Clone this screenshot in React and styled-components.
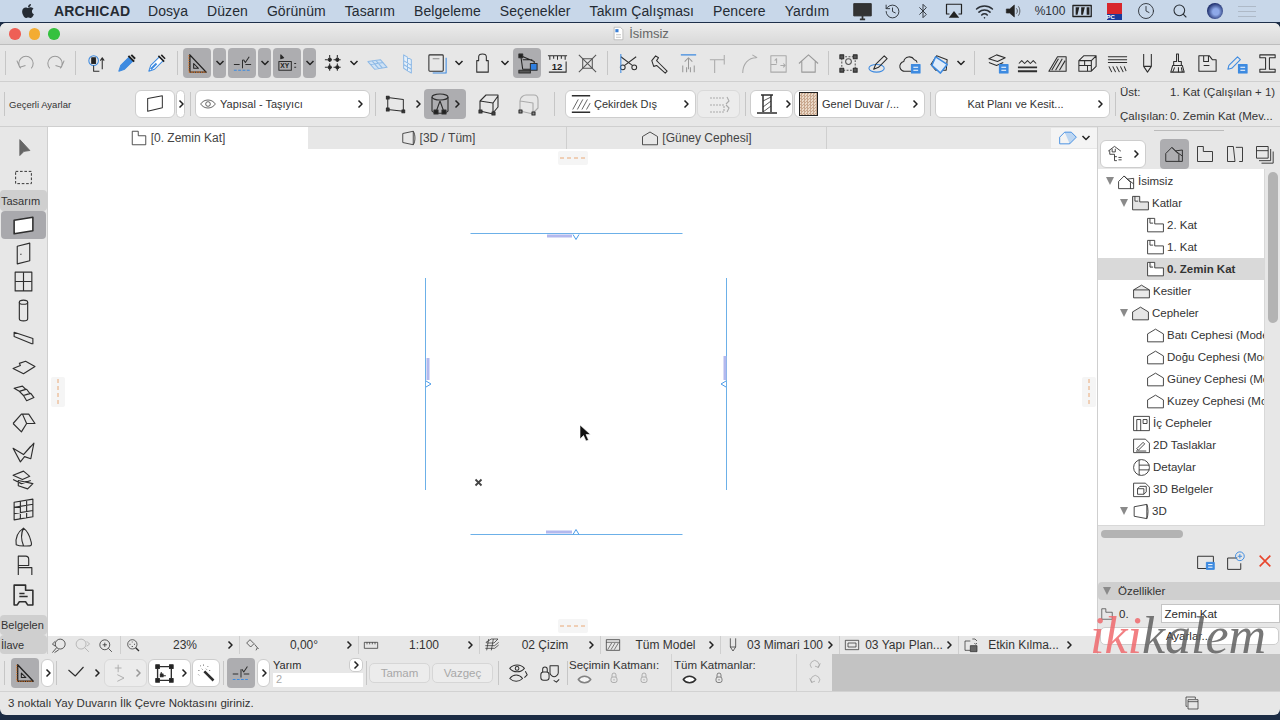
import React from "react";
import styled, { createGlobalStyle } from "styled-components";
import { FaApple } from "react-icons/fa";
import { History, Bluetooth, Wifi, Search, Clock } from "lucide-react";

const GlobalStyle = createGlobalStyle`
  html, body { margin: 0; padding: 0; background: #1c2c44; }
  body { font-family: "Liberation Sans", Arial, sans-serif; color: #2b2b2b; overflow: hidden; }
  * { box-sizing: border-box; }
`;

const BLUE = "#3d8ae0";

// tool drawings, all on a 24x24 grid
const icons = {
  undo: <path d="M7 17A7.5 7.5 0 1 1 18 17M3 9l3 7 6-2" stroke="#9a9a9a" />,
  redo: <path d="M17 17A7.5 7.5 0 1 0 6 17M21 9l-3 7-6-2" stroke="#9a9a9a" />,
  pick: <><circle cx="9" cy="9" r="5" stroke={BLUE} /><rect x="7" y="6" width="4" height="6" fill="#222" /><path d="M9 14v6h6M18 18V6l-2 3M18 6l2 3" /></>,
  dropper: <><path d="M4 20l2-6 9-9 4 4-9 9z" fill={BLUE} stroke={BLUE} /><path d="M14 4l6 6M17 3l4 4" stroke="#222" strokeWidth="2" /></>,
  dropper2: <><path d="M4 20l2-6 9-9 4 4-9 9z" fill="#fff" stroke={BLUE} /><path d="M6 18l6-6" stroke={BLUE} strokeWidth="2" /><path d="M14 4l6 6M17 3l4 4" stroke="#222" strokeWidth="1.6" /></>,
  triangle: <><path d="M4 3v18h17z" stroke="#222" strokeWidth="1.5" /><path d="M8 12v5h5z" stroke="#222" /><path d="M3 21h18M3 3v18" stroke="#e07a2a" strokeDasharray="1.5 1" /></>,
  snap: <><path d="M3 13h6M15 13h6M12 8v9" /><path d="M13 8l2 3 4-6" /><path d="M3 19h18" stroke={BLUE} strokeDasharray="3 1.5" /></>,
  xy: <><path d="M5 3l3 3-3 1z" fill="#222" /><rect x="3" y="10" width="13" height="9" /><text x="4.5" y="17" fontSize="7" fontFamily="Liberation Sans" fontWeight="700" fill="#222" stroke="none">XY</text><path d="M19 12h2M19 16h2" /></>,
  grid: <><path d="M8 3v18M16 3v18M3 8h18M3 16h18" strokeDasharray="3 1.5" /><g fill="#222"><circle cx="8" cy="8" r="1.6" /><circle cx="16" cy="8" r="1.6" /><circle cx="8" cy="16" r="1.6" /><circle cx="16" cy="16" r="1.6" /></g></>,
  plane: <path d="M2 10l13-2 7 8-13 2zM6 9l7 8M10 8.500l7 8M5 13l13-2" stroke="#8db9e6" fill="#cfe2f5" />,
  plane2: <path d="M8 3l8 5v14l-8-5zM8 9l8 5M8 13l8 5M12 5v15" stroke="#8db9e6" fill="#e6f0fa" />,
  sheet: <><rect x="3" y="3" width="15" height="17" rx="1" /><path d="M7 22h14V6" stroke={BLUE} /><path d="M7 7h7" stroke="#888" /></>,
  person: <path d="M8 9V5a4 3 0 0 1 8 0v4h2v12H6V9z" />,
  align: <><path d="M5 4l14 6v8H7zM7 8h10" stroke="#222" /><rect x="3" y="2" width="4" height="4" fill="#222" /><path d="M3 19h12v3H3z" fill="#555" /><rect x="15" y="12" width="7" height="7" fill="#2f7fe0" /></>,
  ruler: <><path d="M2 4h20M4 4v4M8 4v3M12 4v4M16 4v3M20 4v4M3 21h18V10" /><text x="6" y="19" fontSize="10" fontFamily="Liberation Sans" fontWeight="700" fill="#222" stroke="none">12</text></>,
  cross: <><rect x="7" y="7" width="10" height="10" stroke="#555" /><path d="M3 3l18 18M21 3L3 21" stroke="#555" /></>,
  scissors: <><circle cx="6" cy="16" r="2.500" /><circle cx="18" cy="16" r="2.500" /><path d="M8 14L20 5M16 14L4 5" /><path d="M4 2v20" stroke={BLUE} /></>,
  wrench: <path d="M5 9l4-5 3 2-2 3 3 3 8 8-2 2-9-8-3 1z" />,
  up: <><path d="M4 3h16" stroke={BLUE} /><path d="M12 6v12M8 10l4-4 4 4M6 14v7M10 16v5M14 16v5M18 14v7" stroke="#999" /></>,
  corner: <path d="M8 22V8h10M8 8H3M18 3v10" stroke="#aaa" />,
  curve: <path d="M6 22C6 12 12 6 20 6M16 3l5 3M3 12" stroke="#aaa" />,
  box: <><rect x="4" y="4" width="16" height="17" stroke="#aaa" /><path d="M10 12V7l-2 2M14 14h5M17 12l2 2-2 2M4 13h6" stroke="#aaa" /></>,
  home: <path d="M2 12L12 3l10 9M5 10v11h14V10" stroke="#999" />,
  frame: <><path d="M5 5h14v14H5z" strokeDasharray="2 1.5" stroke="#555" /><circle cx="12" cy="10" r="3" stroke="#555" /><g fill="#555"><rect x="3" y="3" width="4" height="4" /><rect x="17" y="3" width="4" height="4" /><rect x="3" y="17" width="4" height="4" /><rect x="17" y="17" width="4" height="4" /></g></>,
  penBlue: <><ellipse cx="10" cy="17" rx="8" ry="4" stroke={BLUE} /><path d="M7 18l2-5 9-9 3 3-9 9z" /></>,
  cloud: <><path d="M14 20H8a5 5 0 0 1-2-10 6 6 0 0 1 11-2 4 4 0 0 1 3 3" /><rect x="14" y="13" width="9" height="9" fill={BLUE} stroke={BLUE} /><path d="M16 16h5M16 19h5" stroke="#fff" /></>,
  gem: <><path d="M3 13l6-9 11 4-1 11H8z" /><path d="M8 5l12 8-7 9-9-8z" stroke={BLUE} strokeWidth="1.600" fill="#dfecfa" /></>,
  stack: <><path d="M3 7l8-4 9 3-8 4zM3 11l8 3 7-3M3 15" /><rect x="14" y="13" width="9" height="9" fill={BLUE} stroke={BLUE} /><path d="M16 16h5M16 19h5" stroke="#fff" /></>,
  waves: <><path d="M3 12l3-3 3 3 3-3 3 3 3-3 3 3" /><path d="M2 16h20M2 20h20" strokeWidth="2" /></>,
  hatchBox: <><path d="M3 20L12 5h9v15z" fill="#ddd" /><path d="M6 19l7-12M10 19l7-12M14 19l6-10" /></>,
  bricks: <><path d="M3 9l5-5h13v11l-5 5H3zM3 9h13v11M16 9l5-5M3 14h13M9 9v5M12 14v6" /></>,
  layersH: <path d="M2 5h20M2 8h20M2 11h20M3 15l3 6M7 15l3 6M11 15l3 6M15 15l3 6M19 15l2 5" strokeWidth="1.100" />,
  pen: <><path d="M8 2v13l4 6 4-6V2M8 15h8" /></>,
  brush: <><path d="M11 2h2v8h3v4H8v-4h3zM7 14h10l2 7H5z" /><path d="M9 16l-2 5M13 16v5M16 16l1 5" /></>,
  zoneCard: <><path d="M3 4h11l3 4h4v12H3zM8 4v6h5V4M8 14h6" /></>,
  penCard: <><path d="M3 14l9-9 3 3-9 9-4 1z" stroke={BLUE} /><rect x="13" y="13" width="9" height="9" fill={BLUE} stroke={BLUE} /><path d="M15 16h5M15 19h5" stroke="#fff" /></>,
  beam: <path d="M4 3h16v3h-6v12h6v3H4v-3h6V6H4z" />,
  wallFlat: <path d="M4 6l16-3v13L4 20z" />,
  wallFlatDots: <><path d="M3 5l17 2v13L3 18z" /><g fill="#333"><rect x="1.500" y="3.500" width="3" height="3" /><rect x="1.500" y="16.500" width="3" height="3" /><rect x="18.500" y="18.500" width="3" height="3" /></g></>,
  cylinder: <><ellipse cx="12" cy="5" rx="8" ry="3" /><path d="M4 5v14c2 3 14 3 16 0V5M12 9l-4 11M12 9l4 11" /><g fill="#222"><rect x="6" y="18" width="4" height="4" /><rect x="14" y="18" width="4" height="4" /></g></>,
  wallBox: <><path d="M3 9l13 2v11L3 19zM3 9l6-6h12v12l-5 6M16 11l5-7" /><g fill="#444"><rect x="15" y="20" width="3" height="3" /><rect x="2" y="18" width="3" height="3" /></g></>,
  wallBox2: <><path d="M3 9l13 2v11L3 19zM3 9c0-4 4-6 6-6h8c3 0 4 2 4 5v8l-5 5" stroke="#aaa" /><g fill="#888"><rect x="15" y="20" width="3" height="3" /><rect x="2" y="18" width="3" height="3" /></g></>,
  eye: <><path d="M1 12c5-8 17-8 22 0-5 8-17 8-22 0z" /><circle cx="12" cy="12" r="3.500" /></>,
  hatchBar: <><path d="M2 3h20M2 21h20" strokeWidth="1.800" /><path d="M3 18L9 7M8 18l6-11M13 18l6-11M18 18l4-7" strokeWidth=".8" /></>,
  swap: <><path d="M3 6h14M3 13h14v7H3" strokeDasharray="2 1" stroke="#aaa" /><path d="M20 5l2 4-3 3M20 20l2-4-3-3" stroke="#aaa" /></>,
  wallEnd: <><path d="M6 3h12M8 3v17M16 3v17M2 21h20" strokeWidth="1.500" /><path d="M8 9l8-4M8 15l8-6M8 20l8-6" strokeWidth=".8" /></>,
  arrow: <path d="M7 2v19l5-5 7-1z" fill="#666" stroke="#666" />,
  marquee: <rect x="3" y="5" width="18" height="14" strokeDasharray="3 2" />,
  wall: <path d="M3 7l18-3v13L3 20z" fill="#fff" strokeWidth="1.500" />,
  door: <><path d="M6 5l12-3v17l-12 3z" /><path d="M9 13l1-.5" /></>,
  window: <><rect x="4" y="3" width="16" height="18" /><path d="M12 3v18M4 12h16" /></>,
  column: <><ellipse cx="12" cy="4" rx="4" ry="2" /><path d="M8 4v16a4 2 0 0 0 8 0V4" /></>,
  beamSlope: <path d="M3 6l18 6v5l-1 0L3 10z" />,
  slab: <path d="M2 13l7-3-1-2 6-2 9 5-11 7z" />,
  stairs: <path d="M3 5l8-2 3 3-6 2zM8 8l7-2 3 4-6 2zM12 12l7-2 3 4-7 3z" />,
  roof: <path d="M2 12L10 3h7l6 9-8 0-4-9M2 12l8 8 5-8" />,
  shell: <path d="M2 8l10 6 10-11-3 15-6-2-4 5zM12 14l7-8" />,
  morph: <path d="M2 7l10-4 6 5-7 3zM2 11l8 4 9-3M7 12l14 3-5 5-9-3z" />,
  curtain: <><path d="M3 5l18-3v17L3 22zM3 10l18-3M3 16l18-3M9 4v17M15 3v17" /></>,
  organic: <><path d="M12 3C6 7 4 12 5 19c4 2 9 1 13 1 2 0 2-2 1-5-1-4-3-9-7-12zM12 3c-3 6-2 12 0 17" /></>,
  chair: <path d="M7 21V3h7a3 3 0 0 1 3 3v6H7M7 14h13v7M7 10" />,
  zone: <><path d="M3 3h11v5h7v14h-5l-2-3H8l-2 3H3zM8 14h8M8 11h5" strokeWidth="1.500" /></>,
  lock: <><rect x="6" y="10" width="12" height="11" rx="4" /><path d="M8 10V6a4 4 0 0 1 8 0v4M12 14v3" /></>,
  eyeSwap: <><path d="M3 7c4-5 12-5 16 0-4 5-12 5-16 0zM3 18c4-5 10-5 14 0-4 4-10 4-14 0z" /><circle cx="11" cy="7" r="2" /><path d="M20 10l2 4-3 3" /></>,
  lockSwap: <><rect x="2" y="11" width="9" height="9" rx="3" /><path d="M4 11V8a2.500 2.500 0 0 1 5 0v3M12 4h9v8c0 2-3 4-4.500 4S12 14 12 12z" /><path d="M16 20l3 2 3-3" /></>,
  magL: <><circle cx="11" cy="11" r="7" /><path d="M16 16l5 5M8 11h6M11 8v6" /></>,
  magA: <><circle cx="11" cy="11" r="7" /><path d="M16 16l5 5M11 7v1M11 14v1M7 11h1M14 11h1" strokeWidth="2" /></>,
  zoomPrev: <><circle cx="13" cy="10" r="7" /><path d="M2 10l4-4M2 10l4 3M8 15l-6 7M5 22l6-4" /></>,
  zoomNext: <><circle cx="10" cy="10" r="7" stroke="#aaa" /><path d="M22 10l-4-4M22 10l-4 3M15 15l6 6" stroke="#aaa" /></>,
  angle: <><path d="M4 9l5-5 6 6-5 5zM16 11l4 5M18 20l2-4 2 2" /></>,
  scale: <><rect x="2" y="8" width="20" height="9" /><path d="M6 8v3M10 8v3M14 8v3M18 8v3" /></>,
  layers: <path d="M3 8l8-5h10l-6 6H4zM2 13h14l6-5M2 17h14l6-5M7 3l-3 17M14 3l-3 17" />,
  hatchRect: <><rect x="2" y="4" width="20" height="16" /><path d="M2 8h20M4 19l6-10M9 19l6-10M14 19l6-10" strokeWidth=".9" /></>,
  monitorBox: <><rect x="2" y="5" width="20" height="14" /><rect x="6" y="9" width="12" height="6" /></>,
  renov: <><path d="M3 6h8M3 6v14h8M14 3h4l3 3" /><path d="M17 9l2 2 2-2" /><rect x="11" y="13" width="10" height="9" fill="#666" /></>,
  check: <path d="M2 8l9 8L22 4" strokeWidth="1.500" />,
  polyline: <path d="M11 2v9M7 6h8M10 14l8 4-8 4" stroke="#aaa" />,
  select: <><rect x="5" y="5" width="15" height="15" strokeWidth="1.500" /><g fill="#222"><rect x="3" y="3" width="4" height="4" /><rect x="18" y="3" width="4" height="4" /><rect x="3" y="18" width="4" height="4" /><rect x="18" y="18" width="4" height="4" /></g><path d="M9 15v-4M9 15h5" /><rect x="8" y="13" width="3" height="3" fill="#222" /></>,
  wand: <><path d="M10 10l11 11" strokeWidth="3" /><path d="M3 9h2M9 2v2M14 4l1 1M5 3l1 1M16 9h2M3 14l1 1M12 7l1 1M7 7l1 1" strokeDasharray="1 1" /></>,
  eyeFlat: <path d="M2 12c5-7 15-7 20 0-5 7-15 7-20 0z" fill="#fff" strokeWidth="2.400" />,
  treeHome: <><path d="M4 9l8-6 8 6M6 8v5h6M12 13v8h3M12 16h3M17 17h4M17 20h4" /><path d="M9 6v4h4V6" /></>,
  winCopy: <><rect x="6" y="7" width="15" height="14" /><path d="M3 3h14v3M3 3v14h2M6 10h15" /></>,
  newCard: <><path d="M3 6h18v14H3z" /><rect x="13" y="13" width="9" height="8" fill={BLUE} stroke={BLUE} /><path d="M15 15.500h5M15 18.500h5" stroke="#fff" /></>,
  newPlus: <><path d="M3 8h11M3 8v13h15V14" /><circle cx="17" cy="6" r="5" stroke={BLUE} /><path d="M17 3.500v5M14.500 6h5" stroke={BLUE} /></>,
  closeRed: <path d="M4 4l16 16M20 4L4 20" stroke="#e8452c" strokeWidth="2.400" />,
  docTitle: <><path d="M5 2h10l4 4v16H5z" fill="#fff" stroke="#aaa" /><rect x="7" y="5" width="5" height="5" fill="#3a7fd5" stroke="none" /><path d="M8 14h8M8 18h8" stroke="#aaa" /></>,
  tabPlan: <path d="M3 3h8v6h10v12H3z" />,
  tab3d: <><path d="M5 6l14-3v18L5 18zM19 3c3 4 3 14 0 18" /></>,
  tabElev: <path d="M2 10l10-6 10 6v11H2z" />,
  navHouse: <><path d="M2 11L8 5l6 6v8H2z" stroke={BLUE} /><path d="M8 5h8l6 6-8 8" stroke={BLUE} fill="#bcd6f2" /></>,
  planSet: <path d="M3 3h7v6h11v12H3z" />,
  sectionSet: <path d="M3 3h7l2 18H3zM13 4l8 0v17h-4" />,
  stackSet: <><rect x="3" y="3" width="14" height="14" /><path d="M20 6v14H6M23 9v14H9M3 8h14" /></>,
  homeStack: <><path d="M2 12L9 5l4 4 8-1v13H2z" /><path d="M9 5l8 8v8M13 9l8 6" /></>,
  sec: <path d="M2 10l10-6 10 6v10H2zM2 10h20" fill="#e9e9e9" />,
  elev: <path d="M2 10l10-6 10 6v10H2z" />,
  elevFill: <path d="M2 10l10-6 10 6v10H2z" fill="#e6e6e6" />,
  floorFill: <path d="M2 3h9v7h11v10H2zM5 3v6h4" fill="#e4e4e4" />,
  floor: <path d="M2 3h9v7h11v10H2zM5 3v6h4" fill="#fff" />,
  interior: <><rect x="2" y="3" width="20" height="18" /><path d="M6 21V7h5v14M14 7h5v5h-5z" /></>,
  draft: <><path d="M2 4h15l5 5v12H2z" /><path d="M6 16l8-8 2 2-8 8zM5 19h13" /></>,
  detail: <><circle cx="12" cy="12" r="10" /><path d="M9 2v20M9 9h13M9 15h13" /></>,
  doc3d: <><path d="M2 4h15l5 5v12H2z" /><path d="M7 11h8v7H7zM7 11l3-3h8v7l-3 3" /></>,
  threeD: <path d="M4 6l16-3v18L4 18zM20 3c2 5 2 13 0 18" />,
};

const Glyph = styled.svg`
  width: ${(p) => p.$size}px;
  height: ${(p) => p.$size}px;
  flex: none;
  fill: none;
  stroke: #2e2e2e;
  stroke-width: 1.1;
  stroke-linejoin: round;
`;

const Icon = ({ name, size = 22 }) => (
  <Glyph viewBox="0 0 24 24" $size={size}>{icons[name]}</Glyph>
);

const Chev = ({ grey }) => (
  <Glyph viewBox="0 0 8 10" $size={10}>
    <path d="M2.500 1.500L6 5 2.500 8.500" stroke={grey ? "#999" : "#222"} strokeWidth="1.500" />
  </Glyph>
);
const Down = () => (
  <Glyph viewBox="0 0 10 8" $size={10}>
    <path d="M1.500 2L5 5.500 8.500 2" stroke="#222" strokeWidth="1.500" />
  </Glyph>
);

const Root = styled.div`
  position: relative;
  width: 1280px;
  height: 720px;
  overflow: hidden;
  background: #1c2c44;
`;

const MenuBar = styled.div`
  height: 23px;
  display: flex;
  align-items: center;
  background: #c8d7e9;
  border-bottom: 1px solid #1e2f4a;
  font-size: 14px;
  color: #252b33;
`;
const AppleBox = styled.div`
  width: 54px;
  padding-left: 20px;
  display: flex;
  font-size: 16px;
`;
const AppName = styled.span`
  font-weight: 700;
  width: 94px;
  letter-spacing: .2px;
`;
const MenuItems = styled.div`
  display: flex;
  gap: 19px;
  width: 700px;
  letter-spacing: .07px;
`;
const Tray = styled.div`
  display: grid;
  grid-template-columns: 29px 30px 31px 31px 30px 28px 46px 20px 42px 22px 46px 24px 40px;
  justify-items: center;
  align-items: center;
  color: #2b3037;
  font-size: 12px;
`;
const Avatar = styled.div`
  width: 16px;
  height: 16px;
  border-radius: 50%;
  background: radial-gradient(circle at 55% 55%, #8ea9e8 0 25%, #1d2d6b 70%);
`;
const Flag = styled.div`
  width: 15px;
  height: 17px;
  background: linear-gradient(#d8262c 0 65%, #1a3a9c 65%);
  color: #fff;
  font-size: 6px;
  font-weight: 700;
  display: flex;
  align-items: flex-end;
`;
const MenuLines = styled.div`
  width: 18px;
  height: 11px;
  border-top: 1px solid #aeb9c7;
  border-bottom: 1px solid #aeb9c7;
  background: linear-gradient(#aeb9c7, #aeb9c7) center / 100% 1px no-repeat;
`;

const Win = styled.div`
  height: 692px;
  display: flex;
  flex-direction: column;
  background: #e7e7e7;
  border-radius: 6px;
  overflow: hidden;
`;
const TitleBar = styled.div`
  height: 22px;
  flex: none;
  position: relative;
  display: flex;
  align-items: center;
  justify-content: center;
  gap: 3px;
  background: linear-gradient(#ececec, #d9d9d9);
  border-bottom: 1px solid #bdbdbd;
  font-size: 13px;
  color: #666;
`;
const Lights = styled.div`
  position: absolute;
  left: 9px;
  top: 5px;
  display: flex;
  gap: 8px;
`;
const Light = styled.i`
  width: 11.500px;
  height: 11.500px;
  border-radius: 50%;
  background: ${(p) => p.$c};
`;

const ToolRow = styled.div`
  height: 37px;
  flex: none;
  display: flex;
  align-items: center;
  border-bottom: 1px solid #cfcfcf;
`;
const Tool = styled.div`
  width: ${(p) => p.$w}px;
  flex: none;
  height: ${(p) => (p.$on ? "30px" : "auto")};
  display: flex;
  align-items: center;
  justify-content: center;
  border-radius: 4px;
  background: ${(p) => (p.$on ? "#adadb0" : "transparent")};
`;
const Sep = styled.div`
  width: ${(p) => p.$w}px;
  flex: none;
  height: 24px;
  display: flex;
  justify-content: center;
  &::before { content: ""; width: 1px; background: #c6c6c6; }
`;

const InfoRow = styled.div`
  height: 45px;
  flex: none;
  display: flex;
  align-items: center;
  font-size: 11px;
  border-bottom: 1px solid #cfcfcf;
`;
const InfoLabel = styled.span`
  width: 125px;
  font-size: 9.500px;
  color: #333;
`;
const Btn = styled.div`
  width: ${(p) => p.$w}px;
  height: 28px;
  flex: none;
  display: flex;
  align-items: center;
  gap: ${(p) => p.$gap ?? 4}px;
  justify-content: ${(p) => p.$j || "space-between"};
  padding: 0 ${(p) => p.$pad ?? 4}px;
  border-radius: 6px;
  border: 1px solid ${(p) => (p.$off ? "#dadada" : "#cdcdcd")};
  background: ${(p) => (p.$off ? "#ececec" : "#fff")};
  color: #333;
  white-space: nowrap;
`;
const Grow = styled.span`
  flex: 1;
  text-align: ${(p) => p.$a || "left"};
  overflow: hidden;
`;
const Gap = styled.div`
  width: ${(p) => p.$w}px;
  flex: none;
`;
const Swatch = styled.div`
  width: 19px;
  height: 24px;
  border: 1px solid #222;
  background: repeating-conic-gradient(#c9a88f 0 25%, #ead9c8 0 50%) 0 0 / 3px 3px;
  flex: none;
`;
const Stories = styled.div`
  display: grid;
  grid-template-columns: 50px auto;
  row-gap: 12px;
  font-size: 11.500px;
  white-space: nowrap;
  color: #333;
`;

const Body = styled.div`
  height: 527px;
  flex: none;
  display: flex;
`;

const Palette = styled.div`
  width: 48px;
  flex: none;
  display: flex;
  flex-direction: column;
  border-right: 1px solid #cfcfcf;
  overflow: hidden;
`;
const PalTool = styled.div`
  height: ${(p) => p.$h || 28.400}px;
  flex: none;
  margin: 0 1px;
  display: flex;
  align-items: center;
  justify-content: center;
  border-radius: 4px;
  background: ${(p) => (p.$on ? "#a9a9ad" : "transparent")};
`;
const PalHead = styled.div`
  height: ${(p) => p.$h || 21}px;
  margin-top: ${(p) => p.$top || 0}px;
  flex: none;
  display: flex;
  align-items: center;
  padding-left: 1px;
  font-size: 11px;
  color: #333;
  border-radius: 4px;
  background: #cfcfcf;
`;
const PalList = styled.div`
  flex: 1;
  overflow: hidden;
  display: flex;
  flex-direction: column;
`;

const Center = styled.div`
  width: 1049px;
  flex: none;
  display: flex;
  flex-direction: column;
`;
const Tabs = styled.div`
  height: 22px;
  flex: none;
  display: flex;
  align-items: center;
  font-size: 12px;
  color: #444;
`;
const TabItem = styled.div`
  width: ${(p) => p.$w}px;
  height: 100%;
  flex: none;
  display: flex;
  align-items: center;
  justify-content: center;
  gap: 3px;
  background: ${(p) => (p.$on ? "#fff" : "#e7e7e7")};
  border-right: 1px solid ${(p) => (p.$on ? "#fff" : "#cfcfcf")};
`;
const TabNav = styled.div`
  margin-left: auto;
  width: 46px;
  height: 20px;
  display: flex;
  align-items: center;
  justify-content: center;
  gap: 3px;
  background: #f4f4f4;
`;
const CanvasArea = styled.div`
  height: 487px;
  flex: none;
  background: #fff;
`;
const Drawing = styled.svg`
  display: block;
  width: 1049px;
  height: 487px;
`;
const NavRow = styled.div`
  height: 18px;
  flex: none;
  display: flex;
  align-items: center;
  font-size: 12px;
  color: #333;
`;
const NavBtn = styled.div`
  width: ${(p) => p.$w}px;
  flex: none;
  display: flex;
  justify-content: center;
`;
const NavSeg = styled.div`
  width: ${(p) => p.$w}px;
  height: 18px;
  flex: none;
  display: flex;
  align-items: center;
  padding: 0 4px;
  border-left: 1px solid #cfcfcf;
  white-space: nowrap;
`;
const NavLabel = styled(Grow)`
  padding-left: 4px;
`;

const Panel = styled.div`
  width: 183px;
  flex: none;
  display: flex;
  flex-direction: column;
  border-left: 1px solid #cfcfcf;
  font-size: 11px;
`;
const PanelTop = styled.div`
  height: 42px;
  flex: none;
  display: flex;
  align-items: center;
  padding: 11px 0 0 2px;
  background: linear-gradient(#bbb, #bbb) 56px 3px / 70px 1px no-repeat;
`;
const TreeBox = styled.div`
  height: 357px;
  flex: none;
  display: flex;
`;
const Tree = styled.div`
  width: 167px;
  flex: none;
  padding-top: 1px;
  background: #fff;
  border-bottom: 1px solid #d8d8d8;
  border-right: 1px solid #d8d8d8;
  overflow: hidden;
  font-size: 11.500px;
`;
const TreeRow = styled.div`
  height: 22px;
  display: flex;
  align-items: center;
  gap: 2px;
  padding-left: ${(p) => p.$indent}px;
  background: ${(p) => (p.$on ? "#d9d9d9" : "transparent")};
  font-weight: ${(p) => (p.$on ? 700 : 400)};
  white-space: nowrap;
  color: #333;
`;
const Tri = styled.i`
  width: 0;
  height: 0;
  flex: none;
  margin-right: 1px;
  border-left: 4.500px solid transparent;
  border-right: 4.500px solid transparent;
  border-top: 8px solid #8a8a8a;
`;
const VBarTrack = styled.div`
  flex: 1;
  padding: 3px 2px 0 3px;
`;
const VBar = styled.div`
  height: 151px;
  border-radius: 5px;
  background: #b3b3b3;
`;
const HBarTrack = styled.div`
  height: 14px;
  flex: none;
  padding: 4px 0 0 3px;
`;
const HBar = styled.div`
  width: 82px;
  height: 8px;
  border-radius: 4px;
  background: #b3b3b3;
`;
const PanelIcons = styled.div`
  height: 42px;
  flex: none;
  display: grid;
  grid-template-columns: repeat(3, 30px);
  justify-content: end;
  justify-items: center;
  align-items: center;
`;
const SectionHead = styled.div`
  height: 18px;
  flex: none;
  display: flex;
  align-items: center;
  gap: 6px;
  padding-left: 5px;
  background: #cfcfcf;
  border-radius: 4px 0 0 4px;
  color: #333;
  font-size: 11.500px;
`;
const NameRow = styled.div`
  height: 19px;
  margin-top: 4px;
  flex: none;
  display: flex;
  align-items: center;
  gap: 5px;
  padding-left: 2px;
  font-size: 11.500px;
`;
const NameInput = styled.div`
  margin-left: 27px;
  width: 119px;
  height: 19px;
  flex: none;
  padding: 3px 3px;
  background: #fff;
  border: 1px solid #c4c4c4;
`;
const SettingsBtn = styled.div`
  height: 18px;
  margin: 4px 1px 0 2px;
  flex: none;
  display: flex;
  align-items: center;
  justify-content: center;
  background: #fff;
  border: 1px solid #cdcdcd;
  border-radius: 5px;
  padding-right: 2px;
  font-size: 11.500px;
`;

const Controls = styled.div`
  height: 37px;
  flex: none;
  display: flex;
  background: #c3c3c3;
`;
const ControlsMain = styled.div`
  width: 832px;
  flex: none;
  display: flex;
  align-items: center;
  background: #e7e7e7;
  font-size: 11.500px;
`;
const HalfBox = styled.div`
  width: 90px;
  flex: none;
  display: flex;
  flex-direction: column;
  gap: 1px;
  font-size: 11px;
`;
const HalfTop = styled.div`
  display: flex;
  align-items: center;
  justify-content: space-between;
  height: 14px;
`;
const RoundChev = styled.div`
  width: 14px;
  height: 14px;
  display: flex;
  align-items: center;
  justify-content: center;
  background: #fff;
  border: 1px solid #ccc;
  border-radius: 5px;
`;
const HalfInput = styled.div`
  height: 14px;
  background: #fff;
  color: #aaa;
  padding-left: 3px;
  font-size: 11px;
`;
const GhostBtn = styled.div`
  width: ${(p) => p.$w}px;
  height: 20px;
  flex: none;
  display: flex;
  align-items: center;
  justify-content: center;
  color: #a8a8a8;
  background: #ececec;
  border: 1px solid #d6d6d6;
  border-radius: 5px;
`;
const LayerBox = styled.div`
  width: ${(p) => p.$w}px;
  align-self: stretch;
  flex: none;
  display: flex;
  flex-direction: column;
  justify-content: center;
  gap: 1px;
  padding-left: ${(p) => (p.$line ? 2 : 0)}px;
  border-left: ${(p) => (p.$line ? "1px solid #d2d2d2" : "0")};
  color: #333;
`;
const LayerIcons = styled.div`
  display: grid;
  grid-template-columns: repeat(3, 30px);
  justify-items: center;
  opacity: ${(p) => (p.$dim ? 0.55 : 1)};
`;
const RedoBox = styled.div`
  flex: 1;
  align-self: stretch;
  display: flex;
  flex-direction: column;
  align-items: center;
  justify-content: center;
  gap: 1px;
  border-left: 1px solid #d2d2d2;
`;

const StatusBar = styled.div`
  height: 23px;
  flex: none;
  display: flex;
  align-items: center;
  justify-content: space-between;
  padding: 0 80px 0 8px;
  border-top: 1px solid #d2d2d2;
  font-size: 11.500px;
  color: #333;
`;

const Watermark = styled.div`
  position: absolute;
  left: 1090px;
  top: 606px;
  font-family: "Liberation Serif", serif;
  font-style: italic;
  font-size: 52px;
  line-height: 60px;
  color: #606060;
  opacity: .85;
  pointer-events: none;
  white-space: nowrap;
`;
const WaterRed = styled.span`
  color: #f06a6e;
`;

const toolbar = [
  ["sep", 10], ["undo", 30], ["redo", 30], ["sep", 11], ["pick", 30], ["dropper", 30], ["dropper2", 30], ["sep", 12],
  ["triangle", 28, "on"], ["gap", 2], ["down", 13, "on"], ["gap", 2], ["snap", 28, "on"], ["gap", 2], ["down", 13, "on"], ["gap", 2],
  ["xy", 28, "on"], ["gap", 2], ["down", 13, "on"], ["gap", 2], ["grid", 30], ["down", 12], ["gap", 2], ["plane", 30], ["plane2", 30],
  ["sheet", 30], ["down", 14], ["gap", 1], ["person", 30], ["down", 16], ["align", 28, "on"], ["gap", 1], ["ruler", 30], ["cross", 30], ["sep", 11],
  ["scissors", 30], ["wrench", 30], ["up", 30], ["corner", 30], ["curve", 30], ["box", 30], ["home", 30], ["sep", 10],
  ["frame", 30], ["penBlue", 31], ["cloud", 30], ["gem", 31], ["down", 12], ["sep", 15],
  ["stack", 30], ["waves", 30], ["hatchBox", 30], ["bricks", 30], ["layersH", 30], ["pen", 30], ["brush", 30], ["zoneCard", 30], ["penCard", 30], ["beam", 30],
];

const tools = ["wall", "door", "window", "column", "beamSlope", "slab", "stairs", "roof", "shell", "morph", "curtain", "organic", "chair", "zone"];

const tree = [
  { t: "İsimsiz", i: "homeStack", x: 8, tri: 1 },
  { t: "Katlar", i: "floorFill", x: 22, tri: 1 },
  { t: "2. Kat", i: "floor", x: 48 },
  { t: "1. Kat", i: "floor", x: 48 },
  { t: "0. Zemin Kat", i: "floor", x: 48, on: 1 },
  { t: "Kesitler", i: "sec", x: 34 },
  { t: "Cepheler", i: "elevFill", x: 22, tri: 1 },
  { t: "Batı Cephesi (Model", i: "elev", x: 48 },
  { t: "Doğu Cephesi (Model", i: "elev", x: 48 },
  { t: "Güney Cephesi (Model", i: "elev", x: 48 },
  { t: "Kuzey Cephesi (Model", i: "elev", x: 48 },
  { t: "İç Cepheler", i: "interior", x: 34 },
  { t: "2D Taslaklar", i: "draft", x: 34 },
  { t: "Detaylar", i: "detail", x: 34 },
  { t: "3D Belgeler", i: "doc3d", x: 34 },
  { t: "3D", i: "threeD", x: 22, tri: 1 },
];

const navSegs = [
  [119, "magA", "23%"],
  [119, "angle", "0,00°"],
  [121, "scale", "1:100"],
  [121, "layers", "02 Çizim"],
  [120, "hatchRect", "Tüm Model"],
  [119, "pen", "03 Mimari 100"],
  [119, "monitorBox", "03 Yapı Plan..."],
  [120, "renov", "Etkin Kılma..."],
];

const Toolbar = () => (
  <ToolRow>
    {toolbar.map(([name, w, on], i) => {
      if (name === "sep") return <Sep key={i} $w={w} />;
      if (name === "gap") return <Gap key={i} $w={w} />;
      return (
        <Tool key={i} $w={w} $on={!!on}>
          {name === "down" ? <Down /> : <Icon name={name} size={23} />}
        </Tool>
      );
    })}
  </ToolRow>
);

const InfoBox = () => (
  <InfoRow>
    <Sep $w={9} />
    <InfoLabel>Geçerli Ayarlar</InfoLabel>
    <Gap $w={1} />
    <Btn $w={40} $j="center"><Icon name="wallFlat" size={22} /></Btn>
    <Gap $w={1} />
    <Btn $w={9} $j="center" $pad={0}><Chev /></Btn>
    <Sep $w={10} />
    <Btn $w={175}><Icon name="eye" size={16} /><Grow>Yapısal - Taşıyıcı</Grow><Chev /></Btn>
    <Sep $w={11} />
    <Tool $w={30}><Icon name="wallFlatDots" size={22} /></Tool>
    <Tool $w={13}><Chev /></Tool>
    <Tool $w={42} $on><Icon name="cylinder" size={24} /><Chev /></Tool>
    <Gap $w={8} />
    <Tool $w={30}><Icon name="wallBox" size={24} /></Tool>
    <Gap $w={10} />
    <Tool $w={30}><Icon name="wallBox2" size={24} /></Tool>
    <Sep $w={21} />
    <Btn $w={131} $gap={2}><Icon name="hatchBar" size={22} /><Grow>Çekirdek Dış</Grow><Chev /></Btn>
    <Gap $w={1} />
    <Btn $w={43} $off $j="center"><Icon name="swap" size={24} /></Btn>
    <Sep $w={10} />
    <Btn $w={43}><Icon name="wallEnd" size={24} /><Chev /></Btn>
    <Gap $w={1} />
    <Btn $w={131}><Swatch /><Grow>Genel Duvar /...</Grow><Chev /></Btn>
    <Sep $w={10} />
    <Btn $w={175}><Grow $a="center">Kat Planı ve Kesit...</Grow><Chev /></Btn>
    <Sep $w={10} />
    <Stories>
      <span>Üst:</span><span>1. Kat (Çalışılan + 1)</span>
      <span>Çalışılan:</span><span>0. Zemin Kat (Mev...</span>
    </Stories>
  </InfoRow>
);

const LeftPalette = () => (
  <Palette>
    <PalTool $h={42}><Icon name="arrow" size={20} /></PalTool>
    <PalTool $h={16}><Icon name="marquee" size={21} /></PalTool>
    <PalHead $top={5}>Tasarım</PalHead>
    <PalList>
      {tools.map((n, i) => (
        <PalTool key={n} $on={i === 0}><Icon name={n} size={25} /></PalTool>
      ))}
    </PalList>
    <PalHead $h={20}>Belgelen</PalHead>
    <PalHead $h={19}>İlave</PalHead>
  </Palette>
);

const Handle = ({ x, y, vertical }) => (
  <g>
    <rect x={vertical ? x - 7 : x - 15} y={vertical ? y - 15 : y - 7} width={vertical ? 14 : 30} height={vertical ? 30 : 14} rx="2" fill="#f5f5f5" />
    {vertical
      ? <path d={`M${x} ${y - 13}V${y + 13}`} stroke="#e9a877" strokeDasharray="4 3" />
      : <path d={`M${x - 13} ${y}H${x + 13}`} stroke="#e9a877" strokeDasharray="4 3" />}
  </g>
);

const Plan = () => (
  <Drawing viewBox="48 149 1049 487">
    <Handle x={573} y={158} />
    <Handle x={573} y={626} />
    <Handle x={58} y={392} vertical />
    <Handle x={1089} y={392} vertical />
    <g stroke="#6cb0e8" fill="none">
      <path d="M470.500 233.500H682.500M470.500 534.500H682.500M425.500 278V490M726.500 278V490" />
      <path d="M573 234.500l3 5 3-5M573 534.500l3-5 3 5M426 381l5 3-5 3M726 381l-5 3 5 3" stroke="#4b9be8" />
    </g>
    <g stroke="#b3b9ee" strokeWidth="3" fill="none">
      <path d="M547 236H572M546 532H572M428 358V380M725 356V380" />
    </g>
    <path d="M475.500 479.500l6 6M481.500 479.500l-6 6" stroke="#444" strokeWidth="1.800" />
    <path d="M580 425v14l3.500-3.500 2.500 5.500 2.500-1-2.500-5.500h4.500z" fill="#111" stroke="#fff" strokeWidth=".6" />
  </Drawing>
);

const Navigator = () => (
  <NavRow>
    <NavBtn $w={23}><Icon name="zoomPrev" size={17} /></NavBtn>
    <NavBtn $w={23}><Icon name="zoomNext" size={17} /></NavBtn>
    <NavBtn $w={23}><Icon name="magL" size={17} /></NavBtn>
    <Gap $w={3} />
    {navSegs.map(([w, icon, label]) => (
      <NavSeg key={label} $w={w}>
        <Icon name={icon} size={16} />
        <NavLabel $a="center">{label}</NavLabel>
        <Chev />
      </NavSeg>
    ))}
  </NavRow>
);

const RightPanel = () => (
  <Panel>
    <PanelTop>
      <Btn $w={46}><Icon name="treeHome" size={19} /><Chev /></Btn>
      <Gap $w={14} />
      <Tool $w={29} $on><Icon name="homeStack" size={21} /></Tool>
      <Tool $w={31}><Icon name="planSet" size={20} /></Tool>
      <Tool $w={29}><Icon name="sectionSet" size={20} /></Tool>
      <Tool $w={30}><Icon name="stackSet" size={20} /></Tool>
    </PanelTop>
    <TreeBox>
      <Tree>
        {tree.map((r) => (
          <TreeRow key={r.t} $indent={r.x} $on={!!r.on}>
            {r.tri && <Tri />}
            <Icon name={r.i} size={19} />
            {r.t}
          </TreeRow>
        ))}
      </Tree>
      <VBarTrack><VBar /></VBarTrack>
    </TreeBox>
    <HBarTrack><HBar /></HBarTrack>
    <PanelIcons>
      <Icon name="newCard" size={21} />
      <Icon name="newPlus" size={21} />
      <Icon name="closeRed" size={16} />
    </PanelIcons>
    <SectionHead><Tri />Özellikler</SectionHead>
    <NameRow>
      <Icon name="planSet" size={14} />
      0.
      <NameInput>Zemin Kat</NameInput>
    </NameRow>
    <SettingsBtn>Ayarlar...</SettingsBtn>
  </Panel>
);

const ControlStrip = () => (
  <Controls>
    <ControlsMain>
      <Sep $w={9} />
      <Gap $w={2} />
      <Tool $w={28} $on><Icon name="triangle" size={22} /></Tool>
      <Gap $w={2} />
      <Btn $w={13} $j="center" $pad={0}><Chev /></Btn>
      <Sep $w={5} />
      <Gap $w={3} />
      <Tool $w={28}><Icon name="check" size={18} /></Tool>
      <Tool $w={14}><Chev /></Tool>
      <Btn $w={43} $off><Icon name="polyline" size={20} /><Chev grey /></Btn>
      <Gap $w={1} />
      <Btn $w={43}><Icon name="select" size={22} /><Chev /></Btn>
      <Gap $w={1} />
      <Btn $w={28} $j="center"><Icon name="wand" size={20} /></Btn>
      <Sep $w={7} />
      <Tool $w={28} $on><Icon name="snap" size={22} /></Tool>
      <Gap $w={2} />
      <Btn $w={13} $j="center" $pad={0}><Chev /></Btn>
      <Gap $w={3} />
      <HalfBox>
        <HalfTop>Yarım<RoundChev><Chev /></RoundChev></HalfTop>
        <HalfInput>2</HalfInput>
      </HalfBox>
      <Sep $w={6} />
      <GhostBtn $w={61}>Tamam</GhostBtn>
      <Gap $w={2} />
      <GhostBtn $w={61}>Vazgeç</GhostBtn>
      <Sep $w={10} />
      <Tool $w={30}><Icon name="eyeSwap" size={22} /></Tool>
      <Gap $w={2} />
      <Tool $w={30}><Icon name="lockSwap" size={22} /></Tool>
      <Sep $w={4} />
      <LayerBox $w={102}>
        Seçimin Katmanı:
        <LayerIcons $dim>
          <Icon name="eyeFlat" size={15} />
          <Icon name="lock" size={12} />
          <Icon name="lock" size={12} />
        </LayerIcons>
      </LayerBox>
      <LayerBox $w={125} $line>
        Tüm Katmanlar:
        <LayerIcons>
          <Icon name="eyeFlat" size={15} />
          <Icon name="lock" size={12} />
        </LayerIcons>
      </LayerBox>
      <RedoBox>
        <Icon name="redo" size={14} />
        <Icon name="undo" size={14} />
      </RedoBox>
    </ControlsMain>
  </Controls>
);

const App = () => (
  <Root>
    <GlobalStyle />
    <MenuBar>
      <AppleBox><FaApple /></AppleBox>
      <AppName>ARCHICAD</AppName>
      <MenuItems>
        {["Dosya", "Düzen", "Görünüm", "Tasarım", "Belgeleme", "Seçenekler", "Takım Çalışması", "Pencere", "Yardım"].map((m) => (
          <span key={m}>{m}</span>
        ))}
      </MenuItems>
      <Tray>
        <Glyph viewBox="0 0 24 24" $size={21}><rect x="2" y="3" width="20" height="14" fill="#333" /><path d="M9 21h6M12 17v4" stroke="#333" strokeWidth="2" /></Glyph>
        <History size={17} strokeWidth={1.3} />
        <Bluetooth size={16} strokeWidth={1.4} />
        <Glyph viewBox="0 0 24 24" $size={18}><path d="M6 16H2V3h20v13h-4" stroke="#222" strokeWidth="1.600" /><path d="M12 12l7 9H5z" fill="#222" stroke="none" /></Glyph>
        <Wifi size={19} strokeWidth={2} />
        <Glyph viewBox="0 0 24 24" $size={16}><path d="M2 9h5l7-6v18l-7-6H2z" fill="#222" /><path d="M17 8c2 2 2 6 0 8M20 5c3 4 3 10 0 14" /></Glyph>
        <span>%100</span>
        <Glyph viewBox="0 0 24 14" $size={22}><rect x="1" y="1" width="20" height="12" fill="none" stroke="#222" strokeWidth="1.400" /><path d="M4 3h4l-2 8H4zM10 3h4l-2 8h-2zM16 3h3v8h-3z" fill="#222" stroke="none" /></Glyph>
        <Flag>PC</Flag>
        <Clock size={18} strokeWidth={1.2} />
        <Search size={16} strokeWidth={1.6} />
        <Avatar />
        <MenuLines />
      </Tray>
    </MenuBar>
    <Win>
      <TitleBar>
        <Lights>
          <Light $c="#ee5f56" />
          <Light $c="#f3ac32" />
          <Light $c="#35c13f" />
        </Lights>
        <Icon name="docTitle" size={15} />
        İsimsiz
      </TitleBar>
      <Toolbar />
      <InfoBox />
      <Body>
        <LeftPalette />
        <Center>
          <Tabs>
            <TabItem $w={260} $on><Icon name="tabPlan" size={18} />[0. Zemin Kat]</TabItem>
            <TabItem $w={259}><Icon name="tab3d" size={18} />[3D / Tüm]</TabItem>
            <TabItem $w={260}><Icon name="tabElev" size={18} />[Güney Cephesi]</TabItem>
            <TabNav><Icon name="navHouse" size={20} /><Down /></TabNav>
          </Tabs>
          <CanvasArea><Plan /></CanvasArea>
          <Navigator />
        </Center>
        <RightPanel />
      </Body>
      <ControlStrip />
      <StatusBar>
        3 noktalı Yay Duvarın İlk Çevre Noktasını giriniz.
        <Icon name="winCopy" size={16} />
      </StatusBar>
    </Win>
    <Watermark><WaterRed>iki</WaterRed>kalem</Watermark>
  </Root>
);

export default App;
